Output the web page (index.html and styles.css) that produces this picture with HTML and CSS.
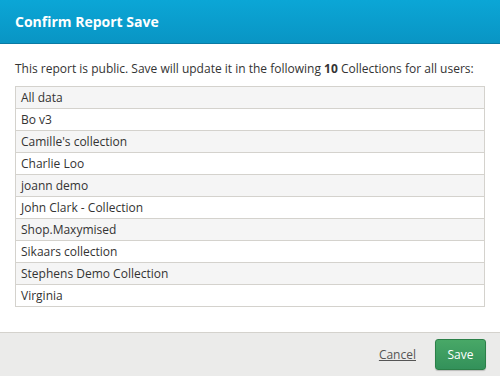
FILE: index.html
```html
<!DOCTYPE html>
<html lang="en">
<head>
    <meta charset="UTF-8">
    <title>Confirm Report Save</title>
    <link rel="stylesheet" href="styles.css">
</head>
<body>
    <div class="modal">
        <div class="modal-header">
            <h3>Confirm Report Save</h3>
        </div>

        <div class="modal-body">
            <p>This report is public. Save will update it in the following <b>10</b> Collections for all users:</p>
            <table class="collections">
                <tr><td>All data</td></tr>
                <tr><td>Bo v3</td></tr>
                <tr><td>Camille's collection</td></tr>
                <tr><td>Charlie Loo</td></tr>
                <tr><td>joann demo</td></tr>
                <tr><td>John Clark - Collection</td></tr>
                <tr><td>Shop.Maxymised</td></tr>
                <tr><td>Sikaars collection</td></tr>
                <tr><td>Stephens Demo Collection</td></tr>
                <tr><td>Virginia</td></tr>
            </table>
        </div>

        <div class="modal-footer">
            <a href="#" class="cancel-link">Cancel</a>
            <button class="btn-save">Save</button>
        </div>
    </div>
</body>
</html>
```

FILE: styles.css
```css
* {
    margin: 0;
    padding: 0;
    box-sizing: border-box;
}

body {
    font-family: 'Open Sans', 'Liberation Sans', sans-serif;
    font-size: 12px;
    color: #333;
    background: #fff;
}

.modal {
    width: 500px;
    height: 376px;
    display: flex;
    flex-direction: column;
}

/* header */
.modal-header {
    height: 44px;
    padding: 0 15px;
    display: flex;
    align-items: center;
    background: linear-gradient(#0ba6d6, #0995c4);
    border-bottom: 1px solid #0a7aa3;
}

.modal-header h3 {
    color: #fff;
    font-size: 14px;
    font-weight: bold;
    margin-top: -1px;
}

/* body */
.modal-body {
    flex: 1;
    padding: 15px 15px 0;
}

.modal-body p {
    line-height: 18px;
    margin-top: 1px;
    margin-bottom: 8px;
}

.collections {
    width: 470px;
    border-collapse: collapse;
}

.collections td {
    height: 22px;
    padding: 0 5px;
    border: 1px solid #d4d2cd;
    line-height: 20px;
}

.collections tr:nth-child(odd) td {
    background: #f5f5f5;
}

/* footer */
.modal-footer {
    height: 44px;
    background: #ebebea;
    border-top: 1px solid #d4d2cd;
    display: flex;
    align-items: center;
    justify-content: flex-end;
    padding: 0 14px 0 0;
    gap: 19px;
}

.cancel-link {
    color: #555;
    text-decoration: underline;
    font-size: 12px;
}

.btn-save {
    width: 51px;
    height: 31px;
    font-family: inherit;
    font-size: 12px;
    color: #fff;
    background: linear-gradient(#48a867, #33915a);
    border: 1px solid #2b8048;
    border-radius: 3px;
    box-shadow: 0 1px 1px rgba(0, 0, 0, 0.2);
}
```
